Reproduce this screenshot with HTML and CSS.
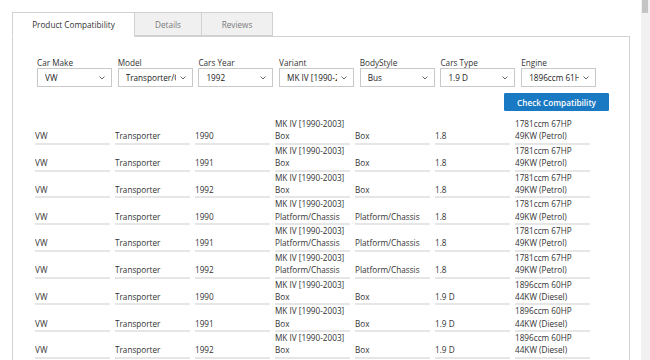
FILE: index.html
```html
<!DOCTYPE html>
<html>
<head>
<meta charset="utf-8">
<link rel="stylesheet" href="styles.css">
</head>
<body>
<div class="page">
  <div class="tabs">
    <div class="tab active">Product Compatibility</div>
    <div class="tab">Details</div>
    <div class="tab">Reviews</div>
  </div>
  <div class="panel">
    <div class="filters">
      <div class="field"><div class="label">Car Make</div><div class="select"><span class="val">VW</span><svg class="chev" viewBox="0 0 6 4"><path d="M0.5 0.5 L3 3 L5.5 0.5" /></svg></div></div>
      <div class="field"><div class="label">Model</div><div class="select"><span class="val">Transporter/Caravelle</span><svg class="chev" viewBox="0 0 6 4"><path d="M0.5 0.5 L3 3 L5.5 0.5" /></svg></div></div>
      <div class="field"><div class="label">Cars Year</div><div class="select"><span class="val">1992</span><svg class="chev" viewBox="0 0 6 4"><path d="M0.5 0.5 L3 3 L5.5 0.5" /></svg></div></div>
      <div class="field"><div class="label">Variant</div><div class="select"><span class="val">MK IV [1990-2003]</span><svg class="chev" viewBox="0 0 6 4"><path d="M0.5 0.5 L3 3 L5.5 0.5" /></svg></div></div>
      <div class="field"><div class="label">BodyStyle</div><div class="select"><span class="val">Bus</span><svg class="chev" viewBox="0 0 6 4"><path d="M0.5 0.5 L3 3 L5.5 0.5" /></svg></div></div>
      <div class="field"><div class="label">Cars Type</div><div class="select"><span class="val">1.9 D</span><svg class="chev" viewBox="0 0 6 4"><path d="M0.5 0.5 L3 3 L5.5 0.5" /></svg></div></div>
      <div class="field"><div class="label">Engine</div><div class="select"><span class="val">1896ccm 61HP 45KW (Diesel)</span><svg class="chev" viewBox="0 0 6 4"><path d="M0.5 0.5 L3 3 L5.5 0.5" /></svg></div></div>
    </div>
    <div class="actions"><button class="btn">Check Compatibility</button></div>
    <table class="results">
      <colgroup><col><col><col><col><col><col><col></colgroup>
      <tbody>
        <tr><td>VW</td><td>Transporter</td><td>1990</td><td>MK IV [1990-2003] Box</td><td>Box</td><td>1.8</td><td>1781ccm 67HP 49KW (Petrol)</td></tr>
        <tr><td>VW</td><td>Transporter</td><td>1991</td><td>MK IV [1990-2003] Box</td><td>Box</td><td>1.8</td><td>1781ccm 67HP 49KW (Petrol)</td></tr>
        <tr><td>VW</td><td>Transporter</td><td>1992</td><td>MK IV [1990-2003] Box</td><td>Box</td><td>1.8</td><td>1781ccm 67HP 49KW (Petrol)</td></tr>
        <tr><td>VW</td><td>Transporter</td><td>1990</td><td>MK IV [1990-2003] Platform/Chassis</td><td>Platform/Chassis</td><td>1.8</td><td>1781ccm 67HP 49KW (Petrol)</td></tr>
        <tr><td>VW</td><td>Transporter</td><td>1991</td><td>MK IV [1990-2003] Platform/Chassis</td><td>Platform/Chassis</td><td>1.8</td><td>1781ccm 67HP 49KW (Petrol)</td></tr>
        <tr><td>VW</td><td>Transporter</td><td>1992</td><td>MK IV [1990-2003] Platform/Chassis</td><td>Platform/Chassis</td><td>1.8</td><td>1781ccm 67HP 49KW (Petrol)</td></tr>
        <tr><td>VW</td><td>Transporter</td><td>1990</td><td>MK IV [1990-2003] Box</td><td>Box</td><td>1.9 D</td><td>1896ccm 60HP 44KW (Diesel)</td></tr>
        <tr><td>VW</td><td>Transporter</td><td>1991</td><td>MK IV [1990-2003] Box</td><td>Box</td><td>1.9 D</td><td>1896ccm 60HP 44KW (Diesel)</td></tr>
        <tr><td>VW</td><td>Transporter</td><td>1992</td><td>MK IV [1990-2003] Box</td><td>Box</td><td>1.9 D</td><td>1896ccm 60HP 44KW (Diesel)</td></tr>
        <tr><td>VW</td><td>Transporter</td><td>1990</td><td>MK IV [1990-2003] Platform/Chassis</td><td>Platform/Chassis</td><td>1.9 D</td><td>1896ccm 60HP 44KW (Diesel)</td></tr>
      </tbody>
    </table>
  </div>
</div>
<div class="scrollbar"><div class="thumb"></div></div>
</body>
</html>
```
FILE: styles.css
```css
html, body {
  margin: 0;
  padding: 0;
  height: 100%;
  overflow: hidden;
  background: #fff;
}
body {
  font-family: "Open Sans", "DejaVu Sans", sans-serif;
  font-size: 8.2px;
  color: #333;
}
.page {
  padding: 12px 20px 0 12px;
  width: 618px;
}
.tabs {
  display: flex;
  position: relative;
  z-index: 1;
  margin-bottom: -1px;
}
.tab {
  height: 24px;
  line-height: 24px;
  box-sizing: border-box;
  border: 1px solid #d1d1d1;
  border-left: none;
  background: #f0f0f0;
  color: #7a7a7a;
  text-align: center;
  font-size: 8.2px;
}
.tab:nth-child(1) { width: 123px; border-left: 1px solid #d1d1d1; }
.tab:nth-child(2) { width: 67px; }
.tab:nth-child(3) { width: 71px; }
.tab.active {
  background: #fff;
  color: #333;
  border-bottom-color: #fff;
  height: 25px;
}
.panel {
  border: 1px solid #d1d1d1;
  box-sizing: border-box;
  width: 618px;
  padding: 20px 20px 0 24px;
  height: 400px;
}
.filters {
  display: grid;
  grid-template-columns: repeat(7, 75px);
  column-gap: 5.7px;
}
.label {
  line-height: 11px;
  height: 11px;
  color: #333;
}
.select {
  height: 19px;
  box-sizing: border-box;
  border: 1px solid #c9c9c9;
  display: flex;
  align-items: center;
  padding: 0 6px 0 7px;
  background: #fff;
}
.val {
  flex: 1;
  overflow: hidden;
  white-space: nowrap;
  color: #222;
  margin-right: 4px;
}
.chev {
  width: 6px;
  height: 4px;
  flex: none;
}
.chev path {
  fill: none;
  stroke: #444;
  stroke-width: 0.8;
}
.actions {
  display: flex;
  justify-content: flex-end;
  margin-top: 6px;
}
.btn {
  height: 18px;
  padding: 0 12px;
  border: 1px solid #1979c3;
  background: #1979c3;
  color: #fff;
  font-family: inherit;
  font-size: 8.2px;
  font-weight: 600;
  border-radius: 1px;
}
.results {
  border-collapse: separate;
  border-spacing: 5px 0;
  table-layout: fixed;
  width: 565px;
  margin-left: -7px;
  margin-top: 7px;
}
.results col { width: 75px; }
.results td {
  padding: 0;
  vertical-align: bottom;
  line-height: 12.375px;
  border-bottom: 2px solid #e6e6e6;
  color: #333;
  overflow: hidden;
}
.scrollbar {
  position: absolute;
  top: 0;
  right: 0;
  width: 9px;
  height: 360px;
  background: #f1f1f1;
}
.thumb {
  margin-left: 1px;
  width: 6px;
  height: 13px;
  background: #c4c4c4;
}
```
